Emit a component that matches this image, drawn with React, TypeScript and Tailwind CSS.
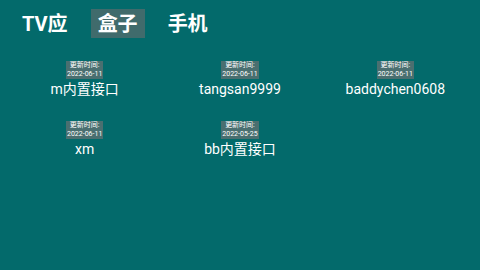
const tabs = [
  { id: "tv", label: "TV应" },
  { id: "box", label: "盒子", active: true },
  { id: "phone", label: "手机" },
];

const sources = [
  { name: "m内置接口", updated: "2022-06-11" },
  { name: "tangsan9999", updated: "2022-06-11" },
  { name: "baddychen0608", updated: "2022-06-11" },
  { name: "xm", updated: "2022-06-11" },
  { name: "bb内置接口", updated: "2022-05-25" },
];

const font = "font-['Roboto','Noto_Sans_CJK_SC',sans-serif]";

export default function App() {
  return (
    <div className={`w-[480px] h-[270px] bg-[#036a6b] overflow-hidden ${font}`}>
      {/* Tabs */}
      <div className="flex items-center gap-[16px] pl-[15px] pt-[9px]">
        {tabs.map((tab) => (
          <div
            key={tab.id}
            className={`h-[29px] px-[7px] flex items-center text-[20px] font-bold text-white leading-none ${
              tab.active ? "bg-[#406b6c]" : ""
            }`}
          >
            {tab.label}
          </div>
        ))}
      </div>

      {/* Sources grid */}
      <div className="grid grid-cols-3 gap-y-[23px] px-[7px] pt-[23px]">
        {sources.map((s) => (
          <div key={s.name} className="flex flex-col items-center">
            <div className="bg-[#4a6f70] px-[1px] text-[7px] leading-[9px] text-white text-center">
              <div>更新时间:</div>
              <div>{s.updated}</div>
            </div>
            <div className="mt-[1px] text-[14px] leading-[18px] text-white">{s.name}</div>
          </div>
        ))}
      </div>
    </div>
  );
}
